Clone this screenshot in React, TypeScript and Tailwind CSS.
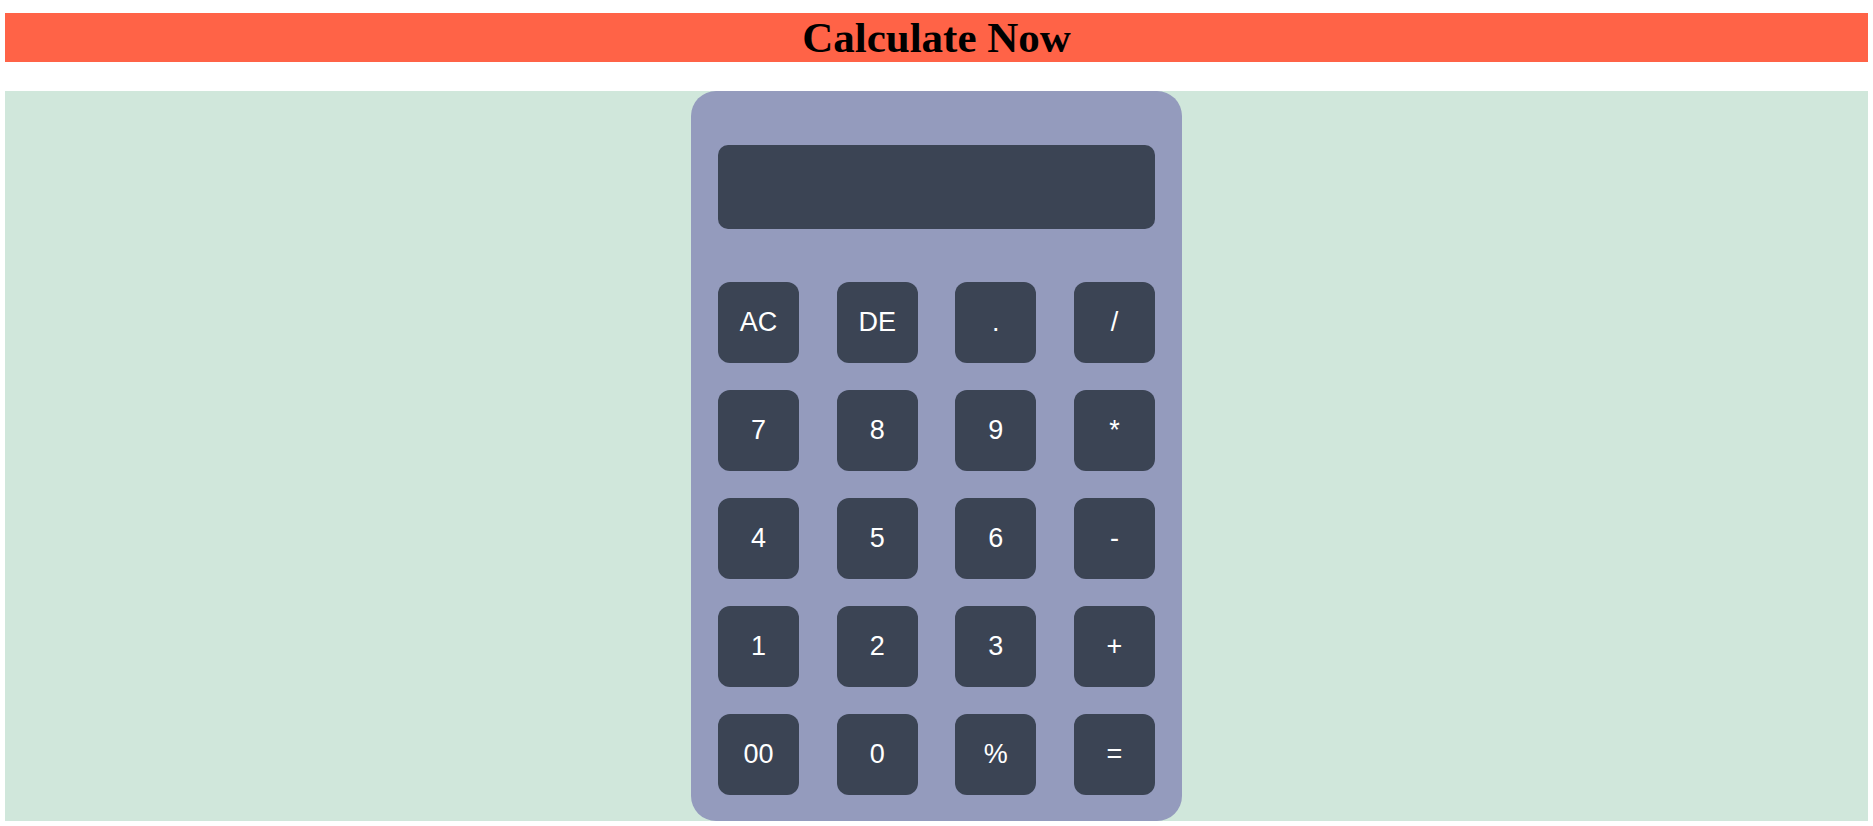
const keys = [
  "AC", "DE", ".", "/",
  "7", "8", "9", "*",
  "4", "5", "6", "-",
  "1", "2", "3", "+",
  "00", "0", "%", "=",
];

export default function App() {
  return (
    <div className="min-h-screen bg-white px-[5px] pt-[13px]">
      <h1 className="bg-[#ff6347] text-center text-[43px] font-bold leading-[49px] text-black [font-family:'Liberation_Serif','Times_New_Roman',serif]">
        Calculate Now
      </h1>

      <div className="mt-[29px] flex justify-center bg-[#d0e7db]">
        <div className="w-[491px] rounded-[25px] bg-[#949bbd] px-[27px] pt-[54px] pb-[26px]">
          <div className="h-[84px] rounded-[10px] bg-[#3b4454]" />

          <div className="mt-[53px] grid grid-cols-[repeat(4,81px)] justify-between gap-y-[27px]">
            {keys.map((k) => (
              <button
                key={k}
                type="button"
                className="flex h-[81px] w-[81px] items-center justify-center rounded-[12px] bg-[#3b4454] text-[27px] text-white [font-family:'Liberation_Sans',Arial,sans-serif]"
              >
                {k}
              </button>
            ))}
          </div>
        </div>
      </div>
    </div>
  );
}
